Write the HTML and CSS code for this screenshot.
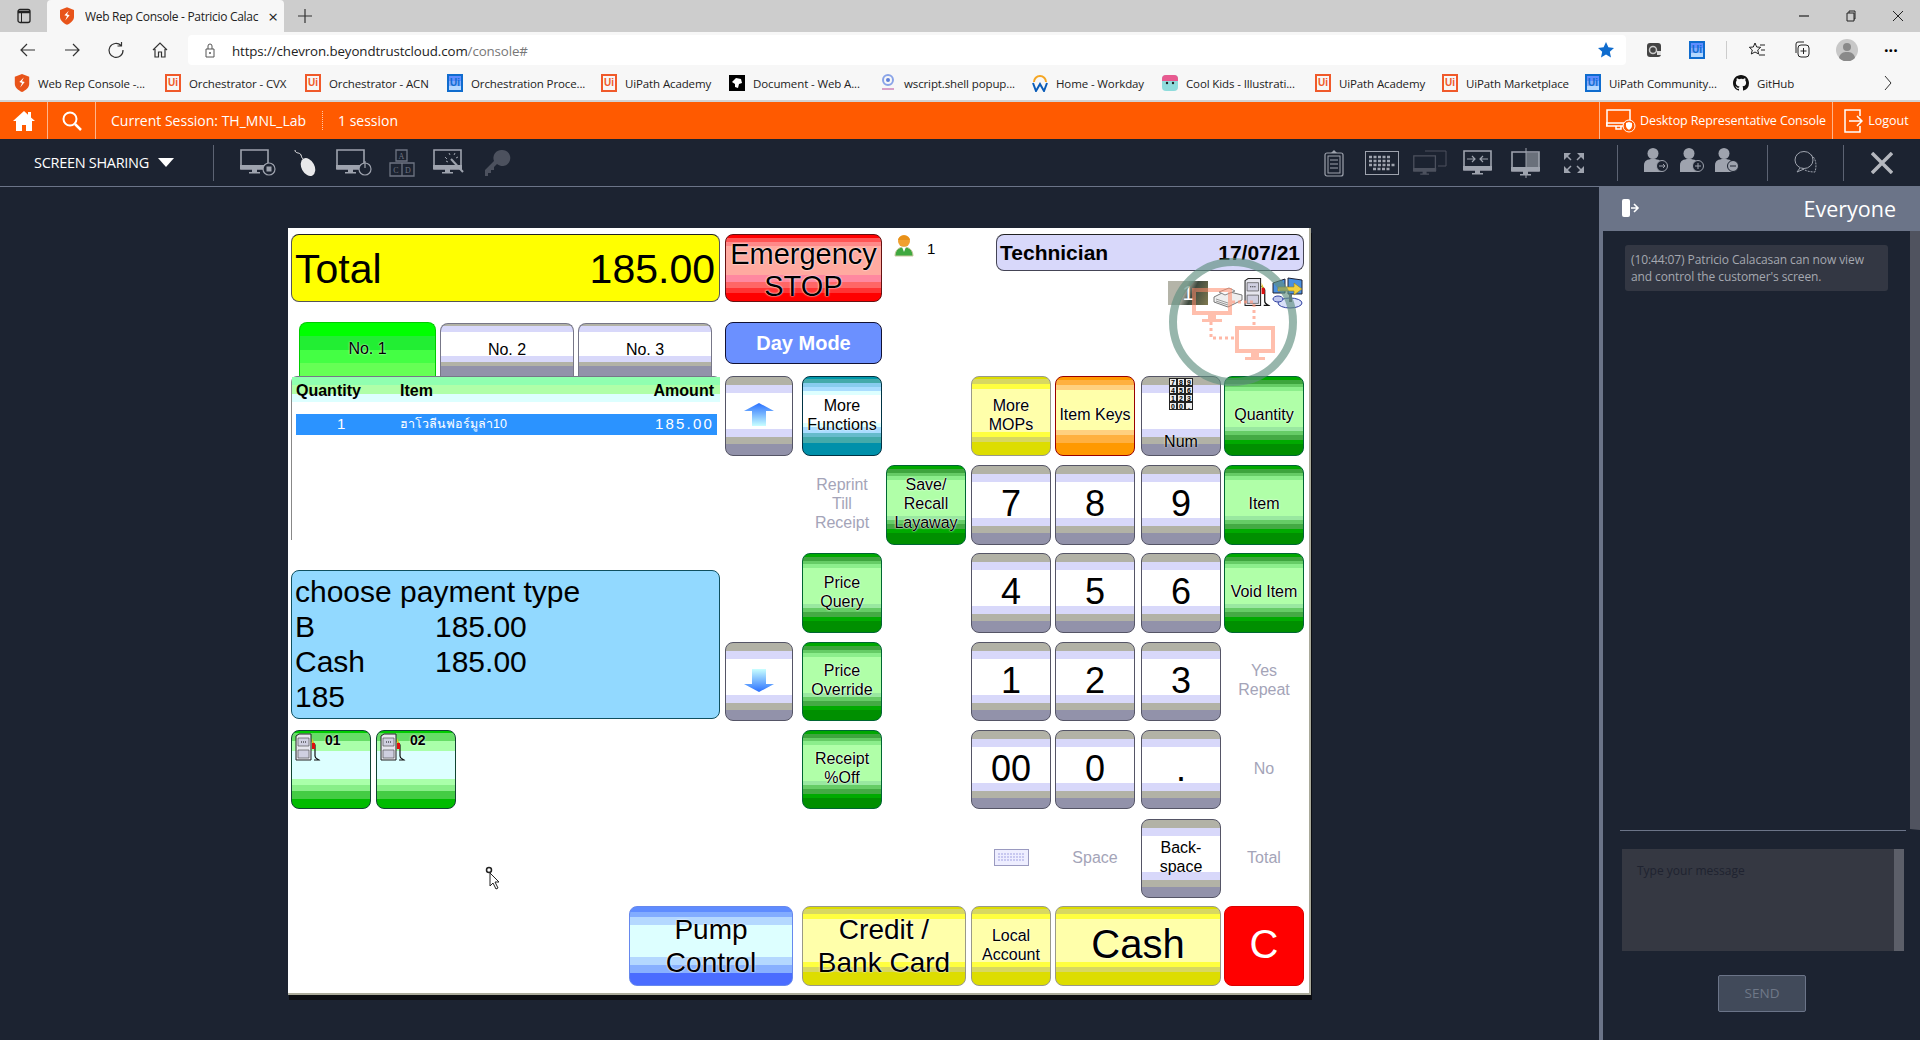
FILE: index.html
```html
<!DOCTYPE html>
<html lang="en">
<head>
	<meta charset="utf-8">
	<title>Web Rep Console</title>
	<link rel="stylesheet" href="styles.css">
</head>
<body>
	<svg class="defs" width="0" height="0">
		<symbol id="mon" viewBox="0 0 30 26">
			<path d="M1 1h27v19H1z" fill="none" stroke="currentColor" stroke-width="1.6"/>
			<path d="M0 16h29v4H0zM12 20h5v3h3v1.500H9V23h3z" fill="currentColor"/>
		</symbol>
		<symbol id="shield" viewBox="0 0 16 20">
			<path d="M8 0l8 3v8c0 4-4 7-8 9-4-2-8-5-8-9V3z" fill="#e8541a"/>
			<path d="M10 4L5 9l3 1-2 5 5-6-3-1z" fill="#fff"/>
		</symbol>
		<symbol id="person" viewBox="0 0 24 26">
			<circle cx="9" cy="6.500" r="5.500" fill="currentColor"/>
			<path d="M0 25v-7c0-4 3-6 9-6s9 2 9 6v7z" fill="currentColor"/>
		</symbol>
		<symbol id="pump" viewBox="0 0 27 28">
			<path d="M1 3l3-2h12v26H1z" fill="#e6e6ee" stroke="#222"/>
			<path d="M3 5h11v8H3zM3 17h11v8H3z" fill="#cfcfe0" stroke="#555" stroke-width=".7"/>
			<path d="M6 9h1M8 9h1M10 9h1" stroke="#111"/>
			<path d="M17 8l3 4v11c0 3 3 3 4 4h-5" fill="none" stroke="#111" stroke-width="1.200"/>
			<path d="M17 10h3v6h-3z" fill="#e01010"/>
			<path d="M17 5l2 5h-2z" fill="#e8c820"/>
		</symbol>
	</svg>

	<div class="tabbar">
		<svg class="tab-toggle" width="16" height="16" viewBox="0 0 16 16"><rect x="2" y="1.500" width="12" height="13" rx="2" fill="none" stroke="#222" stroke-width="1.300"/><path d="M2 4h12" stroke="#222" stroke-width="2.500"/><path d="M5.500 4v10" stroke="#222"/></svg>
		<div class="tab">
			<svg width="14" height="18"><use href="#shield"/></svg>
			<span class="tab-title">Web Rep Console - Patricio Calac</span>
			<span class="tab-close">×</span>
		</div>
		<svg class="tab-new" width="14" height="14" viewBox="0 0 14 14"><path d="M7 0v14M0 7h14" stroke="#333" stroke-width="1.200"/></svg>
		<div class="win-ctrls">
			<svg width="12" height="12" viewBox="0 0 12 12"><path d="M1 6h10" stroke="#222" stroke-width="1.200"/></svg>
			<svg width="12" height="12" viewBox="0 0 12 12"><path d="M2 3h7v8H2zM4 3V1h6v8H9" fill="none" stroke="#222"/></svg>
			<svg width="12" height="12" viewBox="0 0 12 12"><path d="M1 1l10 10M11 1L1 11" stroke="#222"/></svg>
		</div>
	</div>

	<div class="addressbar">
		<div class="nav-btns">
			<svg width="18" height="18" viewBox="0 0 18 18"><path d="M16 9H2M8 3L2 9l6 6" fill="none" stroke="#333" stroke-width="1.200"/></svg>
			<svg width="18" height="18" viewBox="0 0 18 18"><path d="M2 9h14M10 3l6 6-6 6" fill="none" stroke="#333" stroke-width="1.200"/></svg>
			<svg width="18" height="18" viewBox="0 0 18 18"><path d="M14 4.500A7 7 0 1 0 16 9M14.500 1v4h-4" fill="none" stroke="#333" stroke-width="1.200"/></svg>
			<svg width="18" height="18" viewBox="0 0 18 18"><path d="M2 9l7-7 7 7M4 8v8h3.500v-5h3v5H14V8" fill="none" stroke="#333" stroke-width="1.200"/></svg>
		</div>
		<div class="urlbox">
			<svg width="12" height="16" viewBox="0 0 12 16"><path d="M2 7h8v8H2zM4 7V4a2 2 0 0 1 4 0v3" fill="none" stroke="#555"/><circle cx="6" cy="11" r="1" fill="#555"/></svg>
			<span class="url">https://chevron.beyondtrustcloud.com<span class="url-dim">/console#</span></span>
			<svg class="star" width="18" height="18" viewBox="0 0 18 18"><path d="M9 1l2.400 5.300 5.600.6-4.200 3.900 1.200 5.700L9 13.600 4 16.500l1.200-5.700L1 6.900l5.600-.6z" fill="#0f6cce"/></svg>
		</div>
		<div class="browser-tools">
			<svg width="16" height="16" viewBox="0 0 16 16"><rect x="1" y="1" width="14" height="14" rx="3" fill="#444"/><circle cx="7" cy="8" r="3.500" fill="none" stroke="#ccc" stroke-width="1.500"/><path d="M11 9h4v4h-4z" fill="#ddd"/></svg>
			<span class="ui-ico blue">Ui</span>
			<span class="tool-sep"></span>
			<svg width="18" height="18" viewBox="0 0 18 18"><path d="M7 2l1.700 4 4 .3-3 2.700 1 4L7 11l-3.700 2 1-4-3-2.700 4-.3zM12 4h5M13 9h4M11 14h6" fill="none" stroke="#222"/></svg>
			<svg width="18" height="18" viewBox="0 0 18 18"><path d="M3 12V3a2 2 0 0 1 2-2h6" fill="none" stroke="#222"/><rect x="5" y="4" width="11" height="12" rx="3" fill="none" stroke="#222"/><path d="M10.500 7v6M7.500 10h6" stroke="#222"/></svg>
			<svg class="avatar" width="22" height="22" viewBox="0 0 22 22"><circle cx="11" cy="11" r="11" fill="#c8c8c8"/><circle cx="11" cy="8" r="4" fill="#8a8a8a"/><path d="M3 19c1-5 4-6 8-6s7 1 8 6a11 11 0 0 1-16 0z" fill="#8a8a8a"/></svg>
			<span class="dots">···</span>
		</div>
	</div>

	<div class="bookmarks">
		<div class="bm"><svg width="16" height="18"><use href="#shield"/></svg><span>Web Rep Console -...</span></div>
		<div class="bm"><span class="ui-ico">Ui</span><span>Orchestrator - CVX</span></div>
		<div class="bm"><span class="ui-ico">Ui</span><span>Orchestrator - ACN</span></div>
		<div class="bm"><span class="ui-ico blue">Ui</span><span>Orchestration Proce...</span></div>
		<div class="bm"><span class="ui-ico">Ui</span><span>UiPath Academy</span></div>
		<div class="bm"><svg width="16" height="16" viewBox="0 0 16 16"><rect width="16" height="16" fill="#000"/><path d="M3 7l4-4 5 1 1 4-3 1-1 4-3-1V9z" fill="#fff"/></svg><span>Document - Web A...</span></div>
		<div class="bm"><svg width="16" height="18" viewBox="0 0 16 18"><circle cx="8" cy="6" r="5" fill="none" stroke="#8aa4e8" stroke-width="2"/><circle cx="8" cy="6" r="2" fill="#5f7fd8"/><path d="M2 15h12" stroke="#d8a0c8" stroke-width="2"/></svg><span>wscript.shell popup...</span></div>
		<div class="bm"><svg width="16" height="18" viewBox="0 0 16 18"><path d="M2 8a6 6 0 0 1 12 0" fill="none" stroke="#f5a623" stroke-width="2"/><path d="M1 9l3 8 4-7 4 7 3-8" fill="none" stroke="#0a5cb8" stroke-width="2"/></svg><span>Home - Workday</span></div>
		<div class="bm"><svg width="16" height="18" viewBox="0 0 16 18"><rect y="1" width="16" height="16" rx="4" fill="#8fdcdc"/><path d="M0 5a4 4 0 0 1 4-4h8a4 4 0 0 1 4 4v2H0z" fill="#e85a90"/><circle cx="5" cy="9" r="1.200" fill="#222"/><circle cx="11" cy="9" r="1.200" fill="#222"/></svg><span>Cool Kids - Illustrati...</span></div>
		<div class="bm"><span class="ui-ico">Ui</span><span>UiPath Academy</span></div>
		<div class="bm"><span class="ui-ico">Ui</span><span>UiPath Marketplace</span></div>
		<div class="bm"><span class="ui-ico blue">Ui</span><span>UiPath Community...</span></div>
		<div class="bm"><svg width="16" height="16" viewBox="0 0 16 16"><path fill="#111" d="M8 0C3.580 0 0 3.580 0 8c0 3.540 2.290 6.530 5.470 7.590.4.070.55-.17.550-.38v-1.340c-2.230.48-2.700-1.080-2.700-1.080-.360-.92-.890-1.170-.890-1.170-.730-.5.050-.49.050-.49.800.060 1.230.830 1.230.830.710 1.220 1.870.870 2.330.660.070-.520.280-.870.510-1.070-1.780-.2-3.640-.890-3.640-3.950 0-.870.310-1.590.820-2.150-.080-.2-.360-1.020.080-2.120 0 0 .670-.210 2.200.820A7.700 7.700 0 0 1 8 3.870c.680 0 1.360.090 2 .270 1.530-1.040 2.200-.820 2.200-.820.440 1.100.160 1.920.080 2.120.510.560.820 1.270.820 2.150 0 3.070-1.870 3.750-3.650 3.950.290.250.540.730.540 1.480v2.190c0 .210.150.460.550.380A8 8 0 0 0 16 8c0-4.420-3.580-8-8-8z"/></svg><span>GitHub</span></div>
		<svg class="bm-more" width="10" height="16" viewBox="0 0 10 16"><path d="M2 1l6 7-6 7" fill="none" stroke="#333"/></svg>
	</div>

	<div class="orangebar">
		<div class="o-cell">
			<svg width="22" height="20" viewBox="0 0 22 20"><path d="M11 0L0 10h3v10h6v-6h4v6h6V10h3l-4-3.600V1h-3v2.700z" fill="#fff"/></svg>
		</div>
		<div class="o-cell">
			<svg width="20" height="20" viewBox="0 0 20 20"><circle cx="8" cy="8" r="6.500" fill="none" stroke="#fff" stroke-width="2"/><path d="M13 13l6 6" stroke="#fff" stroke-width="2.500"/></svg>
		</div>
		<span class="session-name">Current Session: TH_MNL_Lab</span>
		<span class="session-count">1 session</span>
		<div class="o-cell o-right drc">
			<svg width="30" height="24" viewBox="0 0 30 24"><path d="M1 1h23v16H1zM0 14h25v3H0zM10 17h5v3h-5z" fill="none" stroke="#fff" stroke-width="1.500"/><circle cx="23" cy="17" r="6" fill="#ff5a00" stroke="#fff"/><path d="M23 13l3 1v3c0 2-2 3-3 4-1-1-3-2-3-4v-3z" fill="#fff"/></svg>
			<span>Desktop Representative Console</span>
		</div>
		<div class="o-cell o-right logout">
			<svg width="19" height="24" viewBox="0 0 19 24"><path d="M16 7V1H1v22h15v-6" fill="none" stroke="#fff" stroke-width="1.500"/><path d="M5 12h13M13 7l5 5-5 5" fill="none" stroke="#fff" stroke-width="1.500"/></svg>
			<span>Logout</span>
		</div>
	</div>

	<div class="toolbar">
		<div class="share-menu">SCREEN SHARING<span class="caret"></span></div>
		<div class="tb-sep"></div>
		<div class="tb-group">
			<div class="tb-btn"><svg width="36" height="28" viewBox="0 0 36 28"><use href="#mon" width="30" height="26"/><circle cx="29" cy="20" r="6" fill="#1c2331" stroke="currentColor" stroke-width="1.200"/><rect x="26.500" y="17.500" width="5" height="5" fill="currentColor"/></svg></div>
			<div class="tb-btn light"><svg width="24" height="28" viewBox="0 0 24 28"><path d="M1 1c0 4 5 2 6 5s1 3 2 4" fill="none" stroke="currentColor"/><ellipse cx="14" cy="18" rx="6.500" ry="9.500" fill="currentColor" transform="rotate(-28 14 18)"/></svg></div>
			<div class="tb-btn"><svg width="36" height="28" viewBox="0 0 36 28"><use href="#mon" width="30" height="26"/><circle cx="29" cy="20" r="6" fill="#1c2331" stroke="currentColor" stroke-width="1.200"/><path d="M29 12v7" stroke="currentColor" stroke-width="1.200"/></svg></div>
			<div class="tb-btn dim1"><svg width="26" height="28" viewBox="0 0 26 28"><path d="M7 1h11v11H7zM1 14h12v13H1zM13 14h12v13H13z" fill="none" stroke="currentColor" stroke-width="1.300"/><text x="12.500" y="10" class="abc">A</text><text x="7" y="24" class="abc">C</text><text x="19" y="24" class="abc">D</text></svg></div>
			<div class="tb-btn"><svg width="34" height="28" viewBox="0 0 34 28"><use href="#mon" width="30" height="26"/><path d="M18 10l12 13" stroke="currentColor" stroke-width="2"/><path d="M12 8l2 2m2-6l1 2m5-2l-1 2m4 2l-2 1m-10 3l2 1" stroke="currentColor"/></svg></div>
			<div class="tb-btn dim2"><svg width="26" height="28" viewBox="0 0 26 28"><path d="M17 1a8 8 0 1 1-5 14l-3 3v3H6v3H3v3H0v-6l9-9A8 8 0 0 1 17 1z" fill="currentColor"/></svg></div>
		</div>
		<div class="tb-group tb-right">
			<div class="tb-btn"><svg width="20" height="28" viewBox="0 0 20 28"><rect x="1" y="4" width="18" height="23" rx="2" fill="none" stroke="currentColor" stroke-width="1.200"/><rect x="4" y="7" width="12" height="17" fill="none" stroke="currentColor"/><path d="M6 11h8M6 15h8M6 19h8" stroke="currentColor"/><path d="M7 4l3-3 3 3z" fill="currentColor"/></svg></div>
			<div class="tb-btn"><svg width="34" height="24" viewBox="0 0 34 24"><rect x=".500" y=".500" width="33" height="23" fill="none" stroke="currentColor"/><path d="M4 6h22M4 10h22M4 14h26M8 18h18" stroke="currentColor" stroke-width="2.500" stroke-dasharray="3 1.500"/></svg></div>
			<div class="tb-btn dim2"><svg width="34" height="26" viewBox="0 0 34 26"><path d="M12 1h21v15h-8" fill="none" stroke="currentColor"/><use href="#mon" y="5" width="24" height="21"/></svg></div>
			<div class="tb-btn"><svg width="30" height="26" viewBox="0 0 30 26"><use href="#mon" width="30" height="26"/><path d="M4 9h8M9 6l3 3-3 3M25 9h-8M20 6l-3 3 3 3" fill="none" stroke="currentColor" stroke-width="1.200"/></svg></div>
			<div class="tb-btn"><svg width="30" height="30" viewBox="0 0 30 30"><path d="M15 5h13v14H15z" fill="currentColor" opacity=".6"/><use href="#mon" y="3" width="30" height="26"/><path d="M15 0v30" stroke="currentColor"/></svg></div>
			<div class="tb-btn"><svg width="22" height="22" viewBox="0 0 22 22"><path d="M1 8V1h7L1 8zM21 8V1h-7l7 7zM1 14v7h7l-7-7zM21 14v7h-7l7-7z" fill="currentColor"/><path d="M3 3l5 5M19 3l-5 5M3 19l5-5M19 19l-5-5" stroke="currentColor" stroke-width="1.500"/></svg></div>
		</div>
		<div class="tb-sep sep-people"></div>
		<div class="tb-people">
			<div class="people-btn"><svg width="24" height="26"><use href="#person"/><circle cx="18" cy="19" r="5.500" fill="#1c2331" stroke="currentColor"/><path d="M15 19h6M19 17l2 2-2 2" fill="none" stroke="currentColor"/></svg></div>
			<div class="people-btn"><svg width="24" height="26"><use href="#person"/><circle cx="18" cy="19" r="5.500" fill="#1c2331" stroke="currentColor"/><path d="M15 19h6M18 16v6" stroke="currentColor"/></svg></div>
			<div class="people-btn"><svg width="24" height="26"><use href="#person"/><circle cx="18" cy="19" r="5.500" fill="currentColor" stroke="#1c2331"/><path d="M15 19h6" stroke="#1c2331"/></svg></div>
		</div>
		<div class="tb-sep sep-chat"></div>
		<div class="chat-btn"><svg width="24" height="26" viewBox="0 0 24 26"><ellipse cx="10" cy="10" rx="9" ry="8.500" fill="none" stroke="currentColor"/><path d="M17 5c5 3 6 10 4 17-5 0-10-1-13-4" fill="none" stroke="currentColor" stroke-dasharray="2 1"/><path d="M6 18l-3 4 7-3" fill="none" stroke="currentColor"/></svg></div>
		<div class="tb-sep sep-close"></div>
		<div class="close-btn"><svg width="22" height="22" viewBox="0 0 22 22"><path d="M1 1l20 20M21 1L1 21" stroke="currentColor" stroke-width="3.500"/></svg></div>
	</div>

	<div class="main">
		<div class="stage">
			<div class="pos">
				<div class="total-box c-left r-0"><span>Total</span><span>185.00</span></div>
				<div class="key red halo emergency c-wide r-0">Emergency<br>STOP</div>
				<div class="person-count c-save r-0">
					<svg width="20" height="24" viewBox="0 0 20 24"><circle cx="10" cy="7" r="6" fill="#f0a030"/><path d="M4 6c1-6 11-6 12 0z" fill="#e89018"/><path d="M1 22c0-6 4-9 9-9s9 3 9 9z" fill="#3fa83f" stroke="#c8c8a0"/><path d="M8 13h4l-2 5z" fill="#fff"/></svg>
					<span>1</span>
				</div>
				<div class="status-col c-status r-top">
					<div class="tech-bar"><span>Technician</span><span>17/07/21</span></div>
					<div class="status-icons">
						<span class="st-one">1</span>
						<svg width="30" height="21" viewBox="0 0 30 21"><path d="M1 10l12-6 16 4v5L15 20 1 15z" fill="#eee" stroke="#777"/><path d="M6 5l10-4 6 3-10 4z" fill="#fafafa" stroke="#888"/><path d="M3 12l12 4M3 14l12 4" stroke="#999"/></svg>
						<svg width="28" height="30"><use href="#pump"/></svg>
						<svg width="32" height="32" viewBox="0 0 32 32"><path d="M1 6l12-4v14H1zM16 1l14 2v14H16z" fill="#4a90e0" stroke="#223"/><path d="M6 10h16V6l8 6-8 6v-4H6z" fill="#f0d040" stroke="#a08010" stroke-width=".6"/><ellipse cx="18" cy="26" rx="12" ry="5" fill="#d8e0f8" stroke="#3040a0"/><ellipse cx="6" cy="22" rx="5" ry="3" fill="#c0c8f0" stroke="#3040a0"/><path d="M17 17h3v8h-3z" fill="#667"/></svg>
					</div>
				</div>
				<div class="key blue-flat c-wide r-day">Day Mode</div>

				<div class="left-col c-left r-leftcol">
					<div class="tabs">
						<div class="pos-tab tab-on">No. 1</div>
						<div class="pos-tab tab-off">No. 2</div>
						<div class="pos-tab tab-off">No. 3</div>
					</div>
					<div class="item-table">
						<div class="item-head"><span class="t-qty">Quantity</span><span class="t-item">Item</span><span class="t-amt">Amount</span></div>
						<div class="item-row"><span class="t-qty">1</span><span class="t-item">ฮาโวลีนฟอร์มูล่า10</span><span class="t-amt">185.00</span></div>
					</div>
					<div class="msg-box">
						<div>choose payment type</div>
						<div class="msg-line"><span>B</span><span>185.00</span></div>
						<div class="msg-line"><span>Cash</span><span>185.00</span></div>
						<div>185</div>
					</div>
					<div class="pump-tiles">
						<div class="pump-tile"><svg width="27" height="28"><use href="#pump"/></svg><b>01</b></div>
						<div class="pump-tile"><svg width="27" height="28"><use href="#pump"/></svg><b>02</b></div>
					</div>
				</div>

				<div class="key grey c-arrow r-1"><svg width="30" height="23" viewBox="0 0 30 23"><defs><linearGradient id="up" x1="0" y1="0" x2="0" y2="1"><stop offset="0" stop-color="#2a70ff"/><stop offset="1" stop-color="#c8ffff"/></linearGradient><linearGradient id="down" x1="0" y1="1" x2="0" y2="0"><stop offset="0" stop-color="#2a70ff"/><stop offset="1" stop-color="#c8ffff"/></linearGradient></defs><path d="M15 0l15 8H22v15H8V8H0z" fill="url(#up)"/></svg></div>
				<div class="key grey c-arrow r-4"><svg width="30" height="23" viewBox="0 0 30 23"><path d="M15 23l15-8H22V0H8v15H0z" fill="url(#down)"/></svg></div>

				<div class="key teal halo c-fn r-1">More<br>Functions</div>
				<div class="key off c-fn r-2">Reprint<br>Till<br>Receipt</div>
				<div class="key green halo c-fn r-3">Price<br>Query</div>
				<div class="key green halo c-fn r-4">Price<br>Override</div>
				<div class="key green halo c-fn r-5">Receipt<br>%Off</div>
				<div class="key green halo c-save r-2">Save/<br>Recall<br>Layaway</div>

				<div class="key yellow halo c-n1 r-1">More<br>MOPs</div>
				<div class="key orange halo c-n2 r-1">Item Keys</div>
				<div class="key grey num-key c-n3 r-1">
					<div class="mini-pad"><i>7</i><i>8</i><i>9</i><i>4</i><i>5</i><i>6</i><i>1</i><i>2</i><i>3</i><i>0</i><i>0</i><i>.</i></div>
					<span>Num</span>
				</div>
				<div class="key green halo c-n4 r-1">Quantity</div>

				<div class="key grey big c-n1 r-2">7</div>
				<div class="key grey big c-n2 r-2">8</div>
				<div class="key grey big c-n3 r-2">9</div>
				<div class="key green halo c-n4 r-2">Item</div>

				<div class="key grey big c-n1 r-3">4</div>
				<div class="key grey big c-n2 r-3">5</div>
				<div class="key grey big c-n3 r-3">6</div>
				<div class="key green halo c-n4 r-3">Void Item</div>

				<div class="key grey big c-n1 r-4">1</div>
				<div class="key grey big c-n2 r-4">2</div>
				<div class="key grey big c-n3 r-4">3</div>
				<div class="key off c-n4 r-4">Yes<br>Repeat</div>

				<div class="key grey big c-n1 r-5">00</div>
				<div class="key grey big c-n2 r-5">0</div>
				<div class="key grey big c-n3 r-5">.</div>
				<div class="key off c-n4 r-5">No</div>

				<div class="key off c-n1 r-6"><svg width="35" height="17" viewBox="0 0 35 17"><rect x=".500" y=".500" width="34" height="16" fill="#eeeeff" stroke="#9a9ac0"/><path d="M4 5h27M4 8h27M4 11h27" stroke="#c8c8f0" stroke-width="2" stroke-dasharray="2 1"/></svg></div>
				<div class="key off c-n2 r-6">Space</div>
				<div class="key grey c-n3 r-6">Back-<br>space</div>
				<div class="key off c-n4 r-6">Total</div>

				<div class="key blue xl halo c-pump r-7">Pump<br>Control</div>
				<div class="key yellow xl halo c-credit r-7">Credit /<br>Bank Card</div>
				<div class="key yellow halo c-n1 r-7">Local<br>Account</div>
				<div class="key yellow huge halo c-cash r-7">Cash</div>
				<div class="key redflat huge c-n4 r-7">C</div>

				<!-- connection overlay over the remote screen -->
				<svg class="conn-ring" width="140" height="140" viewBox="0 0 140 140">
					<circle cx="70" cy="70" r="60" fill="none" stroke="#5f8f80" stroke-opacity=".65" stroke-width="8"/>
					<g fill="#ff8a6a" fill-opacity=".55">
						<path d="M29 36h40v27H53v4h6v3H39v-3h6v-4H29zM33 40v19h32V40z" fill-rule="evenodd"/>
						<path d="M72 74h40v27H96v4h6v3H82v-3h6v-4H72zM76 78v19h32V78z" fill-rule="evenodd"/>
					</g>
					<path d="M69 50h22v24M48 70v16h24" fill="none" stroke="#ff9a80" stroke-opacity=".7" stroke-width="3" stroke-dasharray="3 3"/>
				</svg>
				<svg class="pos-cursor" width="18" height="24" viewBox="0 0 18 24"><circle cx="4" cy="4" r="2.500" fill="#fff" stroke="#222" stroke-width="1.500"/><path d="M5 7v13l3-3 3 6 2-1-3-6h4z" fill="#fff" stroke="#222"/></svg>
			</div>
		</div>

		<div class="side">
			<div class="side-head">
				<svg width="18" height="18" viewBox="0 0 18 18"><path d="M0 2a2 2 0 0 1 2-2h4a2 2 0 0 1 2 2v14a2 2 0 0 1-2 2H2a2 2 0 0 1-2-2z" fill="#fff"/><path d="M9 9h7M12 5l4 4-4 4" fill="none" stroke="#fff" stroke-width="1.600"/></svg>
				<span>Everyone</span>
			</div>
			<div class="side-chat">
				<div class="chat-msg">(10:44:07) Patricio Calacasan can now view and control the customer's screen.</div>
			</div>
			<div class="side-compose">
				<div class="compose-box"><span>Type your message</span></div>
				<div class="send-btn">SEND</div>
			</div>
		</div>
	</div>
</body>
</html>
```

FILE: styles.css
```css
*, *:after, *:before {
	box-sizing: border-box;
}
html, body {
	margin: 0;
	height: 100%;
	overflow: hidden;
	background: #1c2331;
	font-family: "Open Sans", sans-serif;
}
body {
	display: flex;
	flex-direction: column;
	height: 1040px;
}
.defs {
	position: absolute;
}

/* browser chrome */
.tabbar {
	display: flex;
	align-items: flex-end;
	height: 32px;
	background: #cdcdcd;
	flex: none;
}
.tab-toggle {
	margin: 0 15px 8px 16px;
}
.tab {
	display: flex;
	align-items: center;
	width: 237px;
	height: 32px;
	background: #f7f7f7;
	border-radius: 4px 4px 0 0;
	padding: 0 6px 0 13px;
	font-size: 12px;
	color: #222;
}
.tab-title {
	flex: 1;
	margin-left: 11px;
	overflow: hidden;
	white-space: nowrap;
	letter-spacing: -0.3px;
}
.tab-close {
	font-size: 17px;
	margin-left: 4px;
}
.tab-new {
	margin: 0 0 9px 14px;
}
.win-ctrls {
	display: flex;
	gap: 35px;
	margin: 0 16px 10px auto;
}
.addressbar {
	display: flex;
	align-items: center;
	height: 36px;
	background: #f7f7f7;
	flex: none;
}
.nav-btns {
	display: flex;
	gap: 26px;
	width: 188px;
	padding-left: 19px;
}
.urlbox {
	display: flex;
	align-items: center;
	width: 1438px;
	height: 30px;
	background: #fff;
	border-radius: 4px;
	padding: 0 11px 0 16px;
}
.url {
	margin: 2px 0 0 16px;
	font-size: 13.3px;
	letter-spacing: -0.1px;
	color: #222;
	white-space: nowrap;
}
.url-dim {
	color: #777;
}
.star {
	margin-left: auto;
}
.browser-tools {
	display: flex;
	align-items: center;
	gap: 27px;
	padding-left: 20px;
}
.tool-sep {
	width: 1px;
	height: 18px;
	background: #ccc;
	margin: 0 -6px;
}
.avatar {
	margin: 0 -2px;
}
.dots {
	font-size: 16px;
	font-weight: 700;
	margin-left: 1px;
}
.ui-ico {
	display: inline-block;
	width: 16px;
	height: 18px;
	flex: none;
	border: 2px solid #f0592a;
	color: #f0592a;
	font: 700 10px/14px "Liberation Sans", sans-serif;
	text-align: center;
}
.ui-ico.blue {
	border-color: #0f6cce;
	color: #0f6cce;
}
.bookmarks {
	display: grid;
	grid-template-columns: 151px 140px 142px 154px 128px 151px 152px 130px 153px 127px 143px 148px 150px 20px;
	align-items: center;
	height: 34px;
	padding: 0 0 2px 14px;
	background: #f7f7f7;
	border-bottom: 2px solid #d2d2d2;
	flex: none;
}
.bm {
	display: flex;
	align-items: center;
	gap: 8px;
	font-size: 11.5px;
	letter-spacing: -0.12px;
	color: #222;
	white-space: nowrap;
}
.bm svg {
	flex: none;
}

/* console header */
.orangebar {
	display: flex;
	align-items: center;
	height: 37px;
	background: #ff5a00;
	color: #fff;
	font-size: 14px;
	flex: none;
}
.o-cell {
	display: flex;
	align-items: center;
	justify-content: center;
	height: 100%;
	width: 48px;
	border-right: 1px solid #ffb48a;
}
.session-name {
	margin-left: 15px;
	width: 212px;
	border-right: 1px dotted #ffc8a8;
	white-space: nowrap;
}
.session-count {
	margin-left: 15px;
}
.o-right {
	width: auto;
	border-right: 0;
	border-left: 1px solid #ffb48a;
	gap: 4px;
	font-size: 12.5px;
	white-space: nowrap;
}
.drc {
	margin-left: auto;
	width: 233px;
	letter-spacing: -0.1px;
}
.logout {
	width: 88px;
	gap: 5px;
}
.toolbar {
	display: flex;
	align-items: center;
	height: 48px;
	border-bottom: 1px solid #6b7488;
	color: #9ea3ae;
	flex: none;
}
.share-menu {
	display: flex;
	align-items: center;
	width: 213px;
	padding-left: 34px;
	color: #fff;
	font-size: 14.5px;
	letter-spacing: -0.3px;
}
.caret {
	width: 0;
	height: 0;
	margin-left: 9px;
	border-left: 8px solid transparent;
	border-right: 8px solid transparent;
	border-top: 9px solid #fff;
}
.tb-sep {
	width: 1px;
	height: 36px;
	background: #5c6373;
	flex: none;
}
.tb-group {
	display: flex;
	margin-left: 20px;
}
.tb-right {
	margin-left: auto;
}
.tb-btn {
	display: flex;
	align-items: center;
	justify-content: center;
	width: 48px;
}
.tb-btn.light {
	color: #e8e8ea;
}
.tb-btn.dim1 {
	color: #6e7482;
}
.tb-btn.dim2 {
	color: #4c515e;
}
.abc {
	font: 8px "Liberation Serif", serif;
	text-anchor: middle;
	fill: currentColor;
}
.sep-people {
	margin-left: 19px;
}
.tb-people {
	display: flex;
	width: 149px;
	padding-left: 26px;
}
.people-btn {
	width: 35.5px;
}
.chat-btn {
	display: flex;
	justify-content: center;
	width: 75px;
}
.close-btn {
	display: flex;
	justify-content: center;
	width: 76px;
	color: #b4b7be;
}

/* main area */
.main {
	display: flex;
	flex: 1;
	min-height: 0;
}
.stage {
	width: 1599px;
	padding: 41px 0 0 288px;
}

/* POS screen, laid out on its own button grid */
.pos {
	position: relative;
	display: grid;
	width: 1023px;
	height: 767px;
	padding: 6px 0 0 3px;
	background: #fff;
	border-right: 2px solid #aaaa9a;
	border-bottom: 2px solid #aaaa9a;
	box-shadow: 1px 5px 0 #0b0d12;
	font-family: "Liberation Sans", sans-serif;
	grid-template-columns:
		[left] 338px [pump] 91px [left-end] 5px
		[arrow] 68px [arrow-end] 9px
		[fn] 80px [fn-end] 4px
		[save] 80px [save-end] 5px
		[n1] 80px [n1-end] 4px
		[n2] 80px [n2-end] 6px
		[n3] 80px [n3-end] 3px
		[n4] 80px [n4-end];
	grid-template-rows:
		[r0] 68px [r0-end] 20px
		[day] 42px [day-end] 12px
		[r1] 80px [r1-end] 9px
		[r2] 80px [r2-end] 8px
		[r3] 80px [r3-end] 9px
		[r4] 79px [r4-end] 9px
		[r5] 79px [r5-end] 10px
		[r6] 79px [r6-end] 8px
		[r7] 80px [r7-end];
}
.c-left { grid-column: left / left-end; }
.c-wide { grid-column: arrow / fn-end; }
.c-arrow { grid-column: arrow / arrow-end; }
.c-fn { grid-column: fn / fn-end; }
.c-save { grid-column: save / save-end; }
.c-n1 { grid-column: n1 / n1-end; }
.c-n2 { grid-column: n2 / n2-end; }
.c-n3 { grid-column: n3 / n3-end; }
.c-n4 { grid-column: n4 / n4-end; }
.c-status { grid-column: n1 / n4-end; }
.c-pump { grid-column: pump / arrow-end; }
.c-credit { grid-column: fn / save-end; }
.c-cash { grid-column: n2 / n3-end; }
.r-0 { grid-row: r0 / r0-end; }
.r-top { grid-row: r0 / day-end; }
.r-day { grid-row: day / day-end; }
.r-leftcol { grid-row: day / r5-end; }
.r-1 { grid-row: r1 / r1-end; }
.r-2 { grid-row: r2 / r2-end; }
.r-3 { grid-row: r3 / r3-end; }
.r-4 { grid-row: r4 / r4-end; }
.r-5 { grid-row: r5 / r5-end; }
.r-6 { grid-row: r6 / r6-end; }
.r-7 { grid-row: r7 / r7-end; }

.total-box {
	display: flex;
	justify-content: space-between;
	align-items: center;
	padding: 2px 4px 0 3px;
	background: #ff0;
	border: 1px solid #555;
	border-top-color: #222;
	border-radius: 8px;
	font-size: 41px;
	color: #000;
}
.key {
	display: flex;
	align-items: center;
	justify-content: center;
	padding-bottom: 3px;
	text-align: center;
	border: 1px solid #556;
	border-radius: 8px;
	font-size: 16px;
	line-height: 19px;
	color: #000;
	overflow: hidden;
}
.halo {
	text-shadow: 0 0 2px #fff, 0 0 1px #fff;
}
.big {
	font-size: 36px;
}
.xl {
	padding-bottom: 0;
	font-size: 28px;
	line-height: 33px;
}
.huge {
	font-size: 40px;
}
.off {
	border: 0;
	color: #a4a4b8;
}
.grey {
	background: linear-gradient(#b2b2a6 0 8px, #d8d8fa 8px 16px, #fff 16px 52px, #d8d8fa 52px 60px, #b2b2a6 60px 67px, #9292aa 67px);
}
.green {
	border-color: #063;
	background: linear-gradient(#00a800 0 3px, #3ea53e 3px 7px, #66cc66 7px 10px, #8cee8c 10px 14px, #b0ffa8 14px 50px, #99e8a0 50px 54px, #66cc66 54px 58px, #44aa44 58px 63px, #00aa00 63px 67px, #008f00 67px);
}
.yellow {
	border-color: #998;
	background: linear-gradient(#dddd00 0 2px, #d8d860 2px 7px, #ffff40 7px 12px, #ffffaa 12px 55px, #ffff40 55px 60px, #d8d860 60px 65px, #dddd00 65px);
}
.orange {
	border-color: #900;
	background: linear-gradient(#ff9900 0 3px, #ffb040 3px 8px, #ffd080 8px 13px, #ffffaa 13px 53px, #ffd080 53px 58px, #ffb040 58px 66px, #ff9900 66px);
}
.teal {
	border-color: #034;
	background: linear-gradient(#0099aa 0 2px, #44aaaa 2px 6px, #88ccee 6px 10px, #aaddff 10px 14px, #ddffff 14px 18px, #fff 18px 46px, #ddffff 46px 50px, #aaddff 50px 56px, #66bbcc 56px 60px, #44aaaa 60px 66px, #0090aa 66px);
}
.blue {
	border-color: #6688ee;
	background: linear-gradient(#5f8cff 0 5px, #82acff 5px 10px, #b4d8ff 10px 18px, #ddffff 18px 50px, #b4d8ff 50px 58px, #88b0ff 58px 66px, #4a6cff 66px);
}
.red {
	padding: 3px 0 0;
	border-color: #611;
	font-size: 29px;
	line-height: 32px;
	background: linear-gradient(#ff0000 0 3px, #ff5555 3px 7px, #ff8888 7px 11px, #ffaaa0 11px 40px, #ff88a0 40px 47px, #ff6666 47px 53px, #ff3333 53px 58px, #ff0000 58px);
}
.redflat {
	background: #f00;
	border-color: #d00;
	color: #fff;
}
.blue-flat {
	padding-bottom: 0;
	background: #6b90ff;
	border-color: #113;
	color: #fff;
	font-size: 20px;
	font-weight: 700;
}
.num-key {
	position: relative;
	flex-direction: column;
	justify-content: flex-start;
	padding-bottom: 0;
}
.num-key span {
	margin-top: 24px;
	line-height: 16px;
	text-shadow: 0 0 2px #fff;
}
.mini-pad {
	display: grid;
	grid-template-columns: repeat(3, 8px);
	grid-auto-rows: 8px;
	width: 24px;
	background: #222;
	margin-top: 1px;
}
.mini-pad i {
	font: 700 7px/8px "Liberation Sans", sans-serif;
	text-align: center;
	background: #eee;
	border: 1px solid #222;
	color: #000;
}

.person-count {
	display: flex;
	align-items: flex-start;
	gap: 13px;
	padding-left: 8px;
	font-size: 15px;
}
.person-count span {
	margin-top: 6px;
}
.status-col {
	display: flex;
	flex-direction: column;
	align-items: flex-end;
}
.tech-bar {
	display: flex;
	justify-content: space-between;
	align-items: center;
	width: 308px;
	height: 37px;
	padding: 0 3px;
	background: #d8d8fa;
	border: 1px solid #445;
	border-top-color: #222;
	border-radius: 8px;
	font-size: 21px;
	font-weight: 700;
}
.status-icons {
	display: flex;
	align-items: flex-start;
	margin-top: 6px;
}
.st-one {
	width: 40px;
	height: 24px;
	margin: 4px 5px 0 0;
	background: linear-gradient(115deg, #b4b4a8 40%, #3f4a3f 60%, #807a50);
	color: #fff;
	font-size: 20px;
	line-height: 24px;
	text-align: center;
}
.status-icons svg:nth-of-type(1) {
	margin: 10px 1px 0 0;
}

/* left column of the POS */
.left-col {
	display: flex;
	flex-direction: column;
}
.tabs {
	display: flex;
	gap: 4px;
	height: 54px;
	padding-left: 8px;
}
.pos-tab {
	width: 134px;
	padding-top: 17px;
	text-align: center;
	font-size: 16px;
	line-height: 18px;
	border-radius: 8px 8px 0 0;
	border: 1px solid #778;
	border-bottom: 0;
	margin-top: 1px;
}
.tab-on {
	width: 137px;
	margin-top: 0;
	border-color: #0c0;
	color: #000;
	text-shadow: 0 0 2px #fff;
	background: linear-gradient(#00ff00 0 13px, #22ee33 13px 27px, #44ff44 27px 40px, #66ff55 40px);
}
.tab-off {
	background: linear-gradient(#b2b2a6 0 2px, #d8d8fa 2px 8px, #fff 8px 32px, #d8d8fa 32px 38px, #b2b2a6 38px 42px, #9292aa 42px);
}
.item-table {
	height: 164px;
	border-left: 1px solid #888;
	border-top: 1px solid #778;
	border-radius: 6px 6px 0 0;
}
.item-head {
	display: flex;
	align-items: center;
	height: 25px;
	padding-top: 3px;
	font-size: 16px;
	font-weight: 700;
	background: linear-gradient(#90ffb0 0 8px, #b0ffa8 8px 17px, #ddffff 17px);
}
.t-qty {
	width: 108px;
	padding-left: 4px;
}
.t-item {
	flex: 1;
}
.t-amt {
	padding-right: 6px;
}
.item-row {
	display: flex;
	align-items: center;
	height: 21px;
	margin: 12px 3px 0 4px;
	padding-bottom: 2px;
	background: #2b93ff;
	color: #fff;
	font-size: 12.5px;
}
.item-row .t-qty {
	padding-left: 41px;
	width: 104px;
	font-size: 15px;
}
.item-row .t-amt {
	padding-right: 3px;
	font-size: 15px;
	letter-spacing: 2.2px;
}
.msg-box {
	height: 149px;
	margin-top: 30px;
	padding: 3px 3px;
	background: #92d9ff;
	border: 1px solid #0f5060;
	border-radius: 8px;
	font-size: 30px;
	line-height: 35px;
	color: #000;
}
.msg-line {
	display: flex;
}
.msg-line span:first-child {
	width: 140px;
}
.pump-tiles {
	display: flex;
	gap: 5px;
	margin-top: 11px;
}
.pump-tile {
	display: flex;
	align-items: flex-start;
	gap: 3px;
	width: 80px;
	height: 79px;
	padding: 2px 3px;
	border: 1px solid #143;
	border-radius: 8px;
	background: linear-gradient(#00cc00 0 2px, #66dd66 2px 10px, #aaffaa 10px 20px, #ddffff 20px 48px, #aaffaa 48px 54px, #88ee88 54px 60px, #44cc44 60px 68px, #00bb00 68px);
}
.pump-tile b {
	margin-top: -1px;
	font-size: 14px;
	line-height: 16px;
	text-shadow: 0 0 2px #fff;
}

/* things lying over the POS */
.conn-ring {
	position: absolute;
	left: 875px;
	top: 24px;
}
.pos-cursor {
	position: absolute;
	left: 197px;
	top: 638px;
}

/* chat panel */
.side {
	display: flex;
	flex-direction: column;
	width: 321px;
	border-left: 4px solid #6b7488;
}
.side-head {
	display: flex;
	align-items: center;
	justify-content: space-between;
	height: 44px;
	margin-left: -4px;
	padding: 0 24px 2px 23px;
	background: #6b7488;
	color: #fff;
	font-size: 21.5px;
}
.side-chat {
	height: 599px;
	padding: 14px 0 0 22px;
	border-right: 10px solid #50535f;
	border-bottom: 1px solid transparent;
}
.chat-msg {
	width: 263px;
	height: 46px;
	padding: 6px 14px 7px 6px;
	background: #333743;
	border-radius: 3px;
	font-size: 12px;
	line-height: 17px;
	color: #a5a8b0;
	letter-spacing: -0.1px;
}
.side-compose {
	margin: 0 14px 0 17px;
	border-top: 1px solid #6b7488;
}
.compose-box {
	width: 282px;
	height: 102px;
	margin: 18px 0 0 2px;
	padding: 13px 15px;
	background: #353842;
	border-right: 10px solid #5c5f69;
	font-size: 12px;
	color: #1f2330;
}
.send-btn {
	width: 88px;
	height: 37px;
	margin: 24px 0 0 98px;
	background: #414a5a;
	border: 1px solid #6b7488;
	border-radius: 2px;
	color: #6f7888;
	font-size: 13.5px;
	line-height: 35px;
	text-align: center;
}
```
